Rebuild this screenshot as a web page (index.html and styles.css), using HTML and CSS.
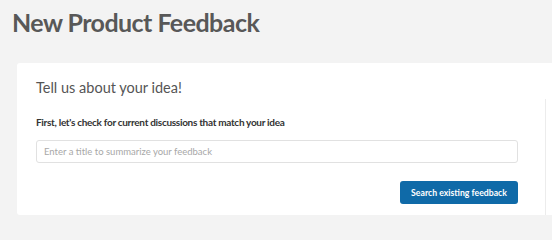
FILE: index.html
```html
<!DOCTYPE html>
<html lang="en">
<head>
<meta charset="utf-8">
<title>New Product Feedback</title>
<link rel="stylesheet" href="styles.css">
</head>
<body>
  <h1 class="page-title">New Product Feedback</h1>
  <div class="card">
    <div class="main">
      <h2 class="card-title">Tell us about your idea!</h2>
      <p class="label">First, let's check for current discussions that match your idea</p>
      <input class="title-input" type="text" placeholder="Enter a title to summarize your feedback">
      <div class="actions">
        <button class="btn-primary" type="button">Search existing feedback</button>
      </div>
    </div>
    <div class="side"></div>
  </div>
</body>
</html>
```
FILE: styles.css
```css
html, body {
  margin: 0;
  padding: 0;
}
body {
  background: #f3f3f3;
  font-family: "Lato", "Open Sans", sans-serif;
  color: #555;
  overflow: hidden;
  height: 226px;
}
.page-title {
  margin: 7px 0 25px 12px;
  font-size: 25px;
  line-height: 31px;
  font-weight: 700;
  color: #585858;
  letter-spacing: -0.55px;
}
.card {
  display: flex;
  margin-left: 17px;
  width: 560px;
  background: #fff;
  border-radius: 3px 0 0 3px;
}
.main {
  width: 482px;
  padding: 16px 27px 11px 19px;
  flex: none;
}
.side {
  flex: 1;
  margin-top: 36px;
  border-left: 1px solid #ececec;
}
.card-title {
  margin: 0;
  font-size: 14.5px;
  line-height: 18px;
  font-weight: 400;
  color: #555;
}
.label {
  margin: 19px 0 0;
  font-size: 10px;
  line-height: 13px;
  font-weight: 700;
  color: #333;
  letter-spacing: -0.3px;
}
.title-input {
  display: block;
  box-sizing: border-box;
  width: 100%;
  height: 23px;
  margin-top: 11px;
  padding: 0 7px;
  border: 1px solid #e1e1e1;
  border-radius: 3px;
  font-family: inherit;
  font-size: 9.5px;
  color: #333;
  outline: none;
}
.title-input::placeholder {
  color: #a8a8a8;
}
.actions {
  display: flex;
  justify-content: flex-end;
  margin-top: 18px;
}
.btn-primary {
  box-sizing: border-box;
  width: 118px;
  height: 23px;
  padding: 0;
  border: none;
  border-radius: 3px;
  background: #0f6aa8;
  color: #fff;
  font-family: inherit;
  font-size: 8.7px;
  font-weight: 700;
  cursor: pointer;
}
```
